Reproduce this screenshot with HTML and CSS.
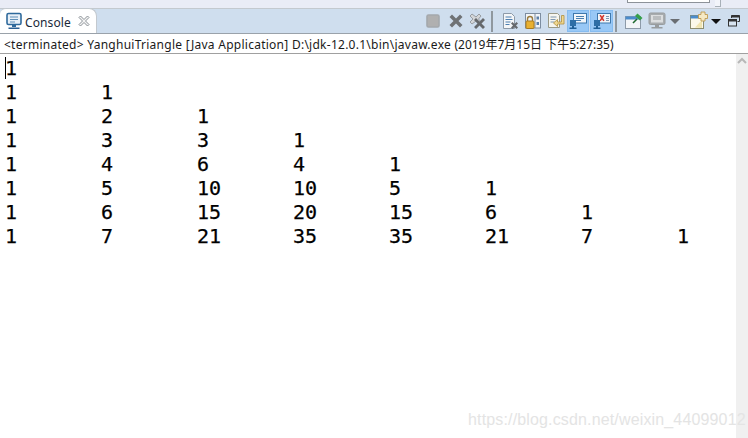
FILE: index.html
```html
<!DOCTYPE html>
<html lang="zh">
<head>
<meta charset="utf-8">
<title>Console</title>
<link rel="stylesheet" href="styles.css">
</head>
<body>
<div class="strip">
  <div class="strip-box"></div>
  <div class="strip-mark"></div>
</div>
<div class="tabbar">
  <div class="tab">
    <svg class="tab-icon" width="18" height="18" viewBox="0 0 18 18"><rect x="2" y="1.500" width="14" height="11" rx="1.500" fill="#e8f0f8" stroke="#2f6a9c" stroke-width="1.600"/><path d="M5 5h8M5 7.500h8M5 10h5" stroke="#5f8fb8" stroke-width="1"/><path d="M7 13h4v2H7z" fill="#2f6a9c"/><path d="M3.500 15.500h11v1.500h-11z" fill="#2a5f92"/></svg>
    <span class="tab-label">Console</span>
    <svg class="tab-close" width="12" height="12" viewBox="0 0 12 12"><path d="M1 2.500 2.500 1 6 4.500 9.500 1 11 2.500 7.500 6 11 9.500 9.500 11 6 7.500 2.500 11 1 9.500 4.500 6z" fill="#f4f4f4" stroke="#8a9096" stroke-width="1"/></svg>
  </div>
  <div class="tools">
    <span class="tool w22"><svg width="14" height="14" viewBox="0 0 14 14"><rect x="1" y="1" width="12" height="12" rx="1.500" fill="#b0b0b0" stroke="#a4a8ac" stroke-width="1.600"/></svg></span>
    <span class="tool w23"><svg width="16" height="16" viewBox="0 0 16 16"><path d="M1.500 4 4 1.500 8 5.500 12 1.500 14.500 4 10.500 8 14.500 12 12 14.500 8 10.500 4 14.500 1.500 12 5.500 8z" fill="#6f7275"/></svg></span>
    <span class="tool w22"><svg width="18" height="18" viewBox="0 0 18 18"><path d="M1 4 3 2 7 5 10 2 12 4 9.500 7 12 10 10 12 7 9 3 12 1 10 4 7z" fill="#d4d6d8" stroke="#8a8e92" stroke-width=".8"/><path d="M5 8 7 6 10.500 9.500 14 6 16 8 12.500 11.500 16 15 14 17 10.500 13.500 7 17 5 15 8.500 11.500z" fill="#66696c"/></svg></span>
    <span class="sep s1"></span>
    <span class="tool w23"><svg width="18" height="18" viewBox="0 0 18 18"><path d="M2.500 1.500h8l3 3v12h-11z" fill="#f4f6f8" stroke="#8d9aa8"/><path d="M4.500 5h6M4.500 7.500h7M4.500 10h5M4.500 12.500h4" stroke="#4d7fb0"/><path d="M10 11.500 11.500 10 13.500 12 15.500 10 17 11.500 15 13.500 17 15.500 15.500 17 13.500 15 11.500 17 10 15.500 12 13.500z" fill="#66696c"/></svg></span>
    <span class="tool w23"><svg width="18" height="18" viewBox="0 0 18 18"><rect x="1.500" y="1.500" width="15" height="14.500" fill="#f2f5f8" stroke="#7d8da0"/><path d="M11 2v14" stroke="#7d8da0"/><path d="M12.500 4.500h2.500v3h-2.500zM12.500 10h2.500v3h-2.500z" fill="#5a7fa8"/><path d="M3.500 9.500V7a2.500 2.500 0 0 1 5 0v2.500" fill="none" stroke="#9a7a3a" stroke-width="1.400"/><rect x="2" y="9" width="8" height="7.500" rx="1" fill="#e8b030" stroke="#a97a20"/></svg></span>
    <span class="tool w23"><svg width="18" height="18" viewBox="0 0 18 18"><path d="M1.500 1.500h9l2 2v12h-11z" fill="#f6f6f0" stroke="#9a9a88"/><path d="M3.500 5h6M3.500 7.500h5M3.500 10h4" stroke="#7f98b0"/><path d="M14.500 3.500v6.500h-4V7.500L6.500 11l4 3.500V12H17V3.500z" fill="#f0d890" stroke="#b09040" stroke-width=".8"/></svg></span>
    <span class="tool w22 active"><svg width="18" height="18" viewBox="0 0 18 18"><rect x="4.500" y="1.500" width="13" height="9.500" fill="#f2f6fa" stroke="#3f78ac"/><path d="M7 4.500h8M7 6.500h8M7 8.500h5" stroke="#4a7fb0"/><path d="M1 8h6v6H1z" fill="#2e6ea6"/><path d="M3 14h2v1.500H3zM.5 15.500h7V17h-7z" fill="#1f5f96"/></svg></span>
    <span class="tool w23 active next"><svg width="18" height="18" viewBox="0 0 18 18"><rect x="4.500" y="1.500" width="13" height="9.500" fill="#f2f6fa" stroke="#3f78ac"/><path d="M6.500 3.500 7.700 2.800 9 4.500 10.300 2.800 11.500 3.500 10 6 11.500 8.500 10.300 9.200 9 7.500 7.700 9.200 6.500 8.500 8 6z" fill="#d23a30"/><path d="M13 4.500h3M13 6.500h3M13 8.500h3" stroke="#7f98b0"/><path d="M1 8h6v6H1z" fill="#2e6ea6"/><path d="M3 14h2v1.500H3zM.5 15.500h7V17h-7z" fill="#1f5f96"/></svg></span>
    <span class="sep s2"></span>
    <span class="tool w23"><svg width="20" height="18" viewBox="0 0 20 18"><rect x="1.500" y="4.500" width="15" height="12" fill="#f2f5f8" stroke="#8d9aa8"/><rect x="1.500" y="4.500" width="15" height="3" fill="#4a8ccc"/><path d="M13.500 1.500 18.500 6 16 8.500 11 4z" fill="#36a04a"/><path d="M9 11 13 7" stroke="#1f6a30" stroke-width="1.600"/></svg></span>
    <span class="tool w23"><svg width="18" height="18" viewBox="0 0 18 18"><rect x="1" y="1" width="16" height="11.500" rx="1.500" fill="#a8acae" stroke="#989c9e"/><rect x="3" y="3" width="12" height="7.500" fill="#dcdedf"/><path d="M5 5h8M5 7h8" stroke="#989c9e"/><path d="M7 12.500h4V15H7zM3.500 15h11v1.500h-11z" fill="#989c9e"/></svg></span>
    <span class="tool w14"><span class="caret-down grey"></span></span>
    <span class="tool w22 m6"><svg width="20" height="20" viewBox="0 0 20 20"><rect x="1.500" y="4.500" width="13" height="13" fill="#fbf8ea" stroke="#8d8d70"/><rect x="1.500" y="4.500" width="13" height="3" fill="#4a8ccc"/><path d="M6 16.500 13 9v8z" fill="#f0e4b0"/><path d="M12 1h4v2.500h2.500v4H16V10h-4V7.500H9.500v-4H12z" fill="#f6e9c4" stroke="#c09a50" stroke-width=".9"/></svg></span>
    <span class="tool w12"><span class="caret-down"></span></span>
    <span class="tool w16 m4"><svg width="12" height="12" viewBox="0 0 12 12"><path d="M3.500.5h8v6h-2M3.500.5v2.500" fill="none" stroke="#333"/><path d="M3.500 1.500h8" stroke="#333" stroke-width="2"/><rect x=".5" y="4.500" width="8" height="6.500" fill="#d8e4f0" stroke="#333"/><path d="M.5 5.500h8" stroke="#333" stroke-width="2"/></svg></span>
  </div>
</div>
<div class="status">&lt;terminated&gt; YanghuiTriangle [Java Application] D:\jdk-12.0.1\bin\javaw.exe <span class="status-date">(2019年7月15日 下午5:27:35)</span></div>
<div class="main">
<pre class="output">1
1	1
1	2	1
1	3	3	1
1	4	6	4	1
1	5	10	10	5	1
1	6	15	20	15	6	1
1	7	21	35	35	21	7	1</pre>
  <span class="cursor"></span>
  <div class="scrollbar"><svg width="12" height="10" viewBox="0 0 12 10"><path d="M2 7 6 3l4 4" fill="none" stroke="#b8b8b8" stroke-width="2"/></svg></div>
</div>
<div class="watermark">https://blog.csdn.net/weixin_44099012</div>
</body>
</html>
```

FILE: styles.css
```css
* { box-sizing: border-box; }
html, body { margin: 0; padding: 0; }
body {
  position: relative;
  width: 748px;
  height: 438px;
  overflow: hidden;
  background: #fff;
  display: flex;
  flex-direction: column;
  font-family: "Noto Sans", "Noto Sans CJK SC", sans-serif;
}
.strip {
  height: 9px;
  flex: none;
  position: relative;
  background: #e9ecf6;
  border-bottom: 1px solid #c3c9cf;
}
.strip-box {
  position: absolute;
  left: 627px;
  top: 0;
  width: 83px;
  height: 3px;
  background: #fff;
  border: 1px solid #8d9299;
  border-top: 0;
}
.strip-mark {
  position: absolute;
  left: 715px;
  top: 0;
  width: 6px;
  height: 7px;
  background: #f2f4fa;
  border-right: 1px solid #a8b0b8;
  border-bottom: 1px solid #a8b0b8;
}
.tabbar {
  height: 25px;
  flex: none;
  display: flex;
  background: #cfdeee;
  border-bottom: 1px solid #9aa2aa;
}
.tab {
  width: 97px;
  height: 25px;
  margin-top: -1px;
  display: flex;
  align-items: center;
  background: #fff;
  border: 1px solid #c3c9cf;
  border-bottom: 0;
  border-left: 0;
  border-radius: 6px 8px 0 0;
  z-index: 1;
}
.tab-icon { margin-left: 5px; flex: none; }
.tab-label {
  margin-left: 2px;
  padding-top: 2px;
  font-size: 12px;
  letter-spacing: 0.1px;
  color: #1b2a3a;
  width: 47px;
}
.tab-close { margin-left: 6px; flex: none; }
.tools {
  margin-left: 325px;
  display: flex;
  align-items: center;
  height: 24px;
}
.tool {
  display: flex;
  align-items: center;
  justify-content: center;
  height: 22px;
  flex: none;
}
.w22 { width: 22px; }
.w23 { width: 23px; }
.w14 { width: 14px; }
.w12 { width: 12px; }
.w16 { width: 16px; }
.m6 { margin-left: 6px; }
.m4 { margin-left: 4px; }
.active {
  background: #98c8f6;
  border: 1px solid #86bcf0;
}
.next { margin-left: 1px; }
.sep { width: 2px; height: 21px; background: #8f989f; flex: none; }
.s1 { margin: 0 5px 0 2px; }
.s2 { margin: 0 5px 0 2px; }
.caret-down {
  width: 0;
  height: 0;
  border-left: 5px solid transparent;
  border-right: 5px solid transparent;
  border-top: 5px solid #111;
}
.caret-down.grey { border-top-color: #6a6e72; }
.status {
  height: 20px;
  flex: none;
  padding: 1px 0 0 4px;
  font-size: 12px;
  line-height: 19px;
  letter-spacing: 0.26px;
  color: #1a1a1a;
  white-space: nowrap;
  border-bottom: 1px solid #a0a0a0;
}
.status-date { letter-spacing: 0; }
.main {
  flex: 1;
  position: relative;
  display: flex;
  min-height: 0;
}
.output {
  flex: 1;
  margin: 0;
  padding: 2px 0 0 5px;
  font-family: "DejaVu Sans Mono", monospace;
  font-size: 20px;
  line-height: 24px;
  color: #000;
  tab-size: 96px;
  -webkit-text-stroke: 0.25px #000;
}
.cursor {
  position: absolute;
  left: 5px;
  top: 3px;
  width: 1px;
  height: 22px;
  background: #000;
}
.scrollbar {
  width: 12px;
  flex: none;
  background: #f0f0f0;
  display: flex;
  justify-content: center;
  align-items: flex-start;
  padding-top: 2px;
}
.watermark {
  position: absolute;
  left: 468px;
  top: 410px;
  font-family: "Liberation Sans", sans-serif;
  font-size: 16px;
  line-height: 20px;
  letter-spacing: 0.15px;
  color: #e4e4e4;
  white-space: nowrap;
}
```
